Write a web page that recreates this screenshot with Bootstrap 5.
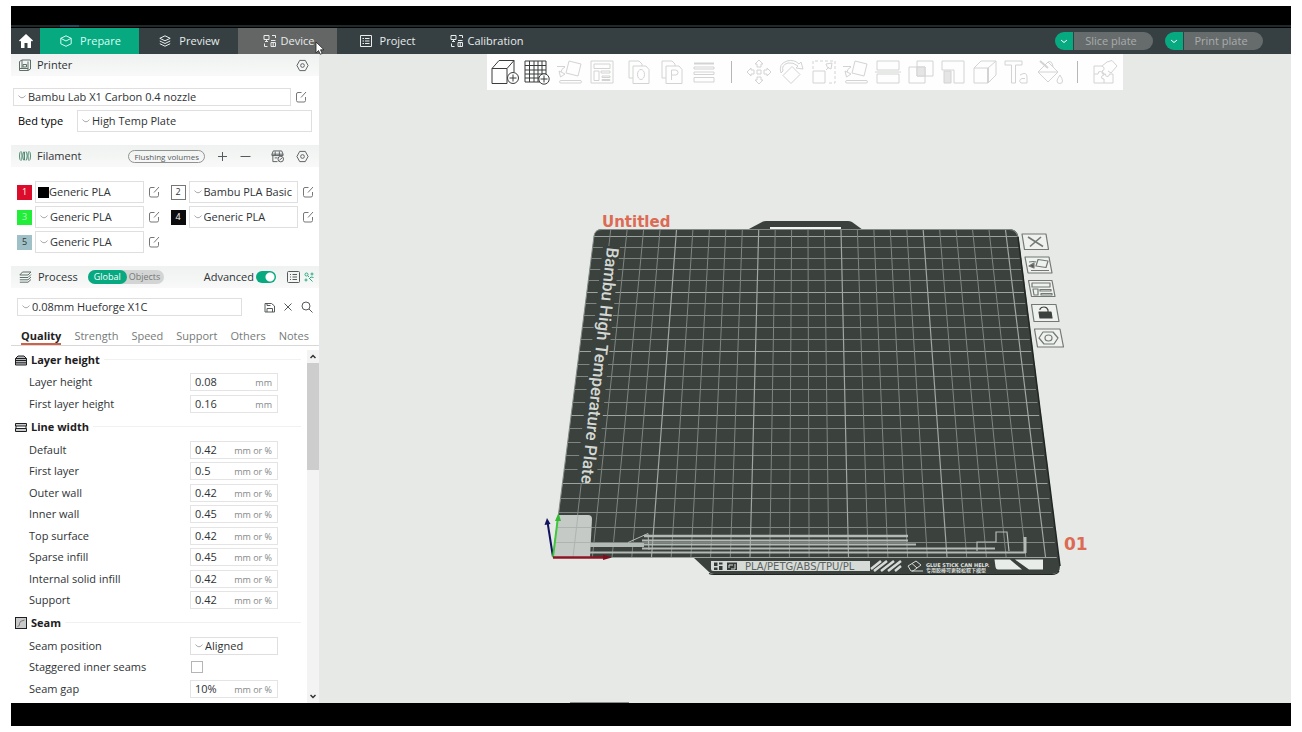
<!DOCTYPE html>
<html lang="en">
<head>
<meta charset="utf-8">
<meta name="viewport" content="width=device-width, initial-scale=1">
<title>Untitled</title>
<link rel="stylesheet" href="https://cdn.jsdelivr.net/npm/bootstrap@5.3.0/dist/css/bootstrap.min.css">
<style>
:root{--accent:#07a981;--edge:#dfdfdf;--ink:#2f3336}
body{font-family:"Open Sans","Noto Sans","Noto Sans CJK SC",sans-serif;font-size:11px;line-height:16px;color:var(--ink);background:#fff}
svg{display:block;flex:none}
button{font:inherit;color:inherit;background:none;border:0;padding:0}
.line-art{fill:none;stroke:currentColor;stroke-width:1}
.shell{height:100vh;min-height:500px;padding:6px 11px}
.screen{background:#000;padding-bottom:23px}
.top-strip{height:22px;background:#000;border-bottom:1px solid #000;display:flex;align-items:flex-end}
.top-strip::before{content:"";flex:1;height:2px;background:linear-gradient(90deg,transparent 49px,#1d4a5c 49px 68px,transparent 68px) #20292a}
.main-nav{height:26px;background:#364043;color:#e8eceb}
.main-nav .home{width:29px}
.tab-btn{width:99px;padding-left:2px}
.tab-btn.on{background:var(--accent);color:#d5fff1}
.tab-btn.hot{background:#646665}
.split-set{gap:12px}
.split{height:18px;border-radius:9px;overflow:hidden;gap:1px}
.split .more{width:18px;background:var(--accent);color:#fff}
.split .act{width:79px;background:#666c6c;color:#a9adac;padding-right:5px}
.side{width:308px;background:#fff}
.side button{color:#555a5c}
.bar-head{height:22px;background:linear-gradient(#eff2f0,#f8f9f8);padding:0 10px 0 8px}
.bar-name{margin-left:6px}
.pick{appearance:none;border:1px solid var(--edge);border-radius:0;color:var(--ink);height:22px;padding:0 0 0 14px;min-width:0;background:#fff url("data:image/svg+xml,%3Csvg xmlns='http://www.w3.org/2000/svg' width='8' height='4'%3E%3Cpath d='M.5.5Q2 2.8 4 2.8T7.500.5' fill='none' stroke='%23aaa'/%3E%3C/svg%3E") 4px 50%/8px 4px no-repeat}
.pick.short{height:18px}
.pick.swatch{background:linear-gradient(#000,#000) 2px 50%/11px 11px no-repeat #fff;padding-left:13px}
.pick.preset{width:225px}
.chip{width:15px;height:15px;font-size:9px;border:1px solid transparent}
.spools{display:grid;grid-template-columns:1fr 1fr;column-gap:10px;row-gap:3px;padding:14px 5px 0 6px}
.spools > div{gap:3px}
.spools .pick{width:109px}
.spools button{margin-left:1px}
.flush{border:1px solid #8f9491;border-radius:8px;height:13px;font-size:8px;line-height:11px;padding:0 5px}
.scope{height:14px;border-radius:7px;background:#d2d5d3;font-size:9px;line-height:14px;margin-left:10px}
.scope button{display:block;line-height:14px;padding:0 4px 0 2px;color:#777}
.scope .on{background:var(--accent);color:#fff;border-radius:7px;padding:0 6px}
.toggle{appearance:none;width:20px;height:12px;border-radius:6px;margin:0 11px 0 2px;background:radial-gradient(circle at 14px 6px,#fff 4px,transparent 5px) var(--accent)}
.tabs-row{gap:13px;border-bottom:1px solid #d8d8d8;padding:0 10px;height:19px;margin-top:11px}
.tabs-row button{height:18px;white-space:nowrap;color:#767a79}
.tabs-row .on{font-weight:700;color:#222;box-shadow:inset 0 -2px #d0604a}
.opts{padding:3px 0 5px;min-height:0;overflow:hidden}
.grp{height:21px;padding:0 6px 0 4px;font-weight:700;color:#1d2022;gap:4px}
.grp::after{content:"";flex:1;border-top:1px solid #f1f1f1}
.opt{height:18px;padding:0 29px 0 18px}
.opt .pick{width:88px}
.field{width:88px;height:18px;border:1px solid #e4e4e4;padding:0 5px 0 4px}
.field input{width:28px;flex:1;border:0;padding:0;background:none;color:inherit;height:16px}
.field span{font-size:9px;color:#858988;padding-top:2px}
.tick{appearance:none;width:12px;height:12px;border:1px solid #b5b5b5;margin:0 75px 0 0}
.track{width:12px;background:#f3f3f3}
.thumb{height:107px;background:#cdcdcd}
.fill-rest{min-height:0}
.view{background:#e6e9e5;min-width:0}
.tools{width:636px;max-width:100%;height:36px;background:#fdfefd;color:#d2d4d2;padding:0 2px}
.tools button{flex:1 1 0;display:flex;justify-content:center}
.tools .live{color:#3a3d3c}
.tools i{width:1px;height:22px;background:#b5b8b6;margin:0 11px}
.scene{min-height:0;flex:1;width:100%}
.pointer{position:absolute;right:12px;top:13px;z-index:2}
</style>
</head>
<body>
<svg width="0" height="0" class="position-absolute" aria-hidden="true">
<defs>
<symbol id="edit" viewBox="0 0 12 12"><path d="M6.500 1.500H3Q1.500 1.500 1.500 3V9.500Q1.500 11 3 11H9Q10.500 11 10.500 9.500V6M6 6.500L11 1"/></symbol>
<symbol id="nut" viewBox="0 0 14 14"><path d="M4 1.500H10L13 7L10 12.500H4L1 7Z" stroke-linejoin="round"/><circle cx="7" cy="7" r="2"/></symbol>
<symbol id="net" viewBox="0 0 14 14"><path d="M1 1.500H6V5.500H1ZM3.500 5.500V7M2 7.500H5M9 1.500H12.500V4M1.500 9.500V12.500H4.500M8 8.500H12.500V12.500H8ZM10.200 8.500V12.500M8 6.500H12.500"/></symbol>
<symbol id="drop" viewBox="0 0 26 26"><path d="M12 2L24 5L21 17L9 14ZM4 21.500H23Q24.500 21.500 24.500 22.800T23 24H4Q2.500 24 2.500 22.800T4 21.500ZM8 8Q4 10 4 13M2 12L3.500 18L8 15ZM0 7.500H8"/></symbol>
</defs>
</svg>

<div class="shell">
<div class="screen h-100 d-flex flex-column">
  <div class="top-strip"></div>
  <nav class="main-nav d-flex align-items-stretch">
    <button class="home d-flex align-items-center justify-content-center" aria-label="Home"><svg width="14" height="14" viewBox="0 0 14 14"><path d="M7 0L0 6.500L1 7.500L2 6.800V14H5.500V9H8.500V14H12V6.800L13 7.500L14 6.500Z" fill="#fff"/></svg></button>
    <button class="tab-btn on d-flex align-items-center justify-content-center gap-2"><svg class="line-art" width="12" height="12" viewBox="0 0 12 12"><path d="M6 .8L11.200 3.300V8.800L6 11.300L.8 8.800V3.300ZM.8 3.300L6 6L11.200 3.300"/></svg>Prepare</button>
    <button class="tab-btn d-flex align-items-center justify-content-center gap-2"><svg class="line-art" width="12" height="12" viewBox="0 0 12 12"><path d="M6 .8L11.200 3.300L6 5.800L.8 3.300ZM.8 6L6 8.500L11.200 6M.8 8.700L6 11.200L11.200 8.700"/></svg>Preview</button>
    <button class="tab-btn hot d-flex align-items-center justify-content-center gap-1 position-relative"><svg class="line-art" width="14" height="14"><use href="#net"/></svg>Device
      <svg class="pointer" width="10" height="14" viewBox="0 0 10 14"><path d="M1 1V12L3.500 9.500L5.300 13.300L7.200 12.400L5.500 8.800H9Z" fill="#fff" stroke="#222" stroke-width=".8"/></svg></button>
    <button class="tab-btn d-flex align-items-center justify-content-center gap-2"><svg class="line-art" width="12" height="12" viewBox="0 0 12 12"><path d="M.5.500H11.500V11.500H.5ZM2.500 3.500H4M5 3.500H9.500M2.500 6H4M5 6H9.500M2.500 8.500H4M5 8.500H9.500"/></svg>Project</button>
    <button class="tab-btn d-flex align-items-center justify-content-center gap-1"><svg class="line-art" width="14" height="14"><use href="#net"/></svg>Calibration</button>
    <div class="split-set ms-auto d-flex align-items-center me-4 pe-1">
      <div class="split d-flex"><button class="more" aria-label="Slice options"><svg class="line-art mx-auto" width="8" height="5"><path d="M1 1L4 3.500L7 1"/></svg></button><button class="act">Slice plate</button></div>
      <div class="split d-flex"><button class="more" aria-label="Print options"><svg class="line-art mx-auto" width="8" height="5"><path d="M1 1L4 3.500L7 1"/></svg></button><button class="act">Print plate</button></div>
    </div>
  </nav>

  <div class="fill-rest d-flex flex-grow-1">
    <aside class="side d-flex flex-column flex-shrink-0">
      <div class="bar-head d-flex align-items-center">
        <svg class="line-art" width="12" height="12" viewBox="0 0 12 12" color="#5c7068"><path d="M3 1H11.500V10L9 11.500H.5V2.500ZM3 1V9.500M9 2.500V11.500M.5 9.500H9M4 5.500H7.500V8H4Z"/></svg>
        <span class="bar-name flex-grow-1">Printer</span>
        <button aria-label="Printer settings"><svg class="line-art" width="13" height="13"><use href="#nut"/></svg></button>
      </div>
      <div class="d-flex align-items-center" style="padding:12px 12px 0 2px">
        <select class="pick short flex-grow-1" aria-label="Printer preset"><option>Bambu Lab X1 Carbon 0.4 nozzle</option></select>
        <button aria-label="Edit printer" class="ms-1"><svg class="line-art" width="12" height="12" color="#777"><use href="#edit"/></svg></button>
      </div>
      <div class="d-flex align-items-center" style="padding:4px 7px 13px">
        <label for="bed" style="width:59px" class="text-black">Bed type</label>
        <select id="bed" class="pick flex-grow-1"><option>High Temp Plate</option></select>
      </div>

      <div class="bar-head d-flex align-items-center">
        <svg class="line-art" width="12" height="10" viewBox="0 0 12 10" color="#4f8a74"><path d="M2 .5Q.5.500.5 5T2 9.500Q3 9.500 3 5T2 .5M5 .5Q3.800 3 3.800 5T5 9.500M7 .5Q8.200 3 8.200 5T7 9.500M10 .5Q9 .5 9 5T10 9.500Q11.500 9.500 11.500 5T10 .5M5.500 1V9"/></svg>
        <span class="bar-name flex-grow-1">Filament</span>
        <button class="flush">Flushing volumes</button>
        <button aria-label="Add filament" style="margin-left:12px"><svg class="line-art" width="11" height="11"><path d="M5.500 1V10M1 5.500H10"/></svg></button>
        <button aria-label="Remove filament" style="margin-left:12px"><svg class="line-art" width="11" height="11"><path d="M.5 5.500H10.500"/></svg></button>
        <button aria-label="Sync filaments" style="margin:0 12px 0 20px"><svg class="line-art" width="13" height="13" viewBox="0 0 14 14"><path d="M2.500 1H11.500L13 4.500H1ZM1 4.500V6H13V4.500M2 6V12.500H7M4.500 1.500V6M9 1.500V6M4 8.500H7"/><circle cx="10.500" cy="9.800" r="3"/><path d="M9 11L12 8.500"/></svg></button>
        <button aria-label="Filament settings"><svg class="line-art" width="13" height="13"><use href="#nut"/></svg></button>
      </div>
      <div class="spools">
        <div class="d-flex align-items-center"><span class="chip d-flex align-items-center justify-content-center text-white" style="background:#dc0d2b">1</span><select class="pick swatch" aria-label="Filament 1"><option>Generic PLA</option></select><button aria-label="Edit filament 1"><svg class="line-art" width="12" height="12" color="#777"><use href="#edit"/></svg></button></div>
        <div class="d-flex align-items-center"><span class="chip d-flex align-items-center justify-content-center" style="border-color:#777">2</span><select class="pick" aria-label="Filament 2"><option>Bambu PLA Basic</option></select><button aria-label="Edit filament 2"><svg class="line-art" width="12" height="12" color="#777"><use href="#edit"/></svg></button></div>
        <div class="d-flex align-items-center"><span class="chip d-flex align-items-center justify-content-center" style="background:#22ee3a;color:#b4ffbc">3</span><select class="pick" aria-label="Filament 3"><option>Generic PLA</option></select><button aria-label="Edit filament 3"><svg class="line-art" width="12" height="12" color="#777"><use href="#edit"/></svg></button></div>
        <div class="d-flex align-items-center"><span class="chip d-flex align-items-center justify-content-center text-white" style="background:#0c0c0c">4</span><select class="pick" aria-label="Filament 4"><option>Generic PLA</option></select><button aria-label="Edit filament 4"><svg class="line-art" width="12" height="12" color="#777"><use href="#edit"/></svg></button></div>
        <div class="d-flex align-items-center"><span class="chip d-flex align-items-center justify-content-center" style="background:#9fc0c6">5</span><select class="pick" aria-label="Filament 5"><option>Generic PLA</option></select><button aria-label="Edit filament 5"><svg class="line-art" width="12" height="12" color="#777"><use href="#edit"/></svg></button></div>
      </div>

      <div class="bar-head d-flex align-items-center" style="margin:13px 0 10px;padding-right:5px">
        <svg class="line-art" width="13" height="12" viewBox="0 0 13 12" color="#5c7068"><path d="M3.500 1H12L9 4H.8ZM.8 6.500H9L12 3.500M.8 8.800H9L12 6M.8 11.200H9L12 8.500"/></svg>
        <span class="bar-name">Process</span>
        <div class="scope d-flex"><button class="on">Global</button><button>Objects</button></div>
        <label class="ms-auto" for="adv">Advanced</label>
        <input id="adv" type="checkbox" class="toggle" checked>
        <button aria-label="Parameter list"><svg class="line-art" width="13" height="12" viewBox="0 0 13 12"><rect x=".5" y=".5" width="12" height="11" rx="1"/><path d="M3 3.500H4M5.500 3.500H10M3 6H4M5.500 6H10M3 8.500H4M5.500 8.500H10"/></svg></button>
        <button aria-label="Compare presets" class="ms-1"><svg class="line-art" width="10" height="10" viewBox="0 0 10 10" color="#2da885"><circle cx="2.500" cy="2.500" r="1.500"/><circle cx="8" cy="2" r="1"/><circle cx="2" cy="8" r="1"/><path d="M4 4L5 5M5 7L7 5L9.500 5.500M6 7L8.500 9.500"/></svg></button>
      </div>
      <div class="d-flex align-items-center" style="padding:0 6px">
        <select class="pick short preset" aria-label="Process preset"><option>0.08mm Hueforge X1C</option></select>
        <div class="ms-auto d-flex align-items-center gap-2">
          <button aria-label="Save"><svg class="line-art" width="11" height="11"><path d="M1 1.500H7.500L10.500 4V10H1ZM3 10V6.500H8.500V10M3 1.500V3.500H6.500"/></svg></button>
          <button aria-label="Discard"><svg class="line-art" width="10" height="10"><path d="M1.500 1.500L8.500 8.500M8.500 1.500L1.500 8.500"/></svg></button>
          <button aria-label="Search"><svg class="line-art" width="12" height="12"><circle cx="5" cy="5" r="4"/><path d="M8 8L11.500 11.500"/></svg></button>
        </div>
      </div>
      <div class="tabs-row d-flex">
        <button class="on">Quality</button><button>Strength</button><button>Speed</button><button>Support</button><button>Others</button><button>Notes</button>
      </div>
      <div class="fill-rest d-flex flex-grow-1">
        <div class="opts flex-grow-1 d-flex flex-column justify-content-between">
          <div class="grp d-flex align-items-center"><svg class="line-art" width="12" height="12" viewBox="0 0 12 12"><path d="M3 2H9L11.500 4.500H.5ZM.5 4.500V11H11.500V4.500" fill="#bbb"/><path d="M.5 6.500H11.500M.5 8.800H11.500"/></svg>Layer height</div>
          <div class="opt d-flex align-items-center justify-content-between"><label for="o1">Layer height</label><div class="field d-flex align-items-center"><input id="o1" value="0.08"><span>mm</span></div></div>
          <div class="opt d-flex align-items-center justify-content-between"><label for="o2">First layer height</label><div class="field d-flex align-items-center"><input id="o2" value="0.16"><span>mm</span></div></div>
          <div class="grp d-flex align-items-center"><svg class="line-art" width="12" height="12" viewBox="0 0 12 12"><path d="M.5 2.500H11.500V5H.5ZM.5 7.500H11.500V10.500H.5Z" fill="#ccc"/><path d="M1 5V7.500M11 5V7.500"/></svg>Line width</div>
          <div class="opt d-flex align-items-center justify-content-between"><label for="o3">Default</label><div class="field d-flex align-items-center"><input id="o3" value="0.42"><span>mm or %</span></div></div>
          <div class="opt d-flex align-items-center justify-content-between"><label for="o4">First layer</label><div class="field d-flex align-items-center"><input id="o4" value="0.5"><span>mm or %</span></div></div>
          <div class="opt d-flex align-items-center justify-content-between"><label for="o5">Outer wall</label><div class="field d-flex align-items-center"><input id="o5" value="0.42"><span>mm or %</span></div></div>
          <div class="opt d-flex align-items-center justify-content-between"><label for="o6">Inner wall</label><div class="field d-flex align-items-center"><input id="o6" value="0.45"><span>mm or %</span></div></div>
          <div class="opt d-flex align-items-center justify-content-between"><label for="o7">Top surface</label><div class="field d-flex align-items-center"><input id="o7" value="0.42"><span>mm or %</span></div></div>
          <div class="opt d-flex align-items-center justify-content-between"><label for="o8">Sparse infill</label><div class="field d-flex align-items-center"><input id="o8" value="0.45"><span>mm or %</span></div></div>
          <div class="opt d-flex align-items-center justify-content-between"><label for="o9">Internal solid infill</label><div class="field d-flex align-items-center"><input id="o9" value="0.42"><span>mm or %</span></div></div>
          <div class="opt d-flex align-items-center justify-content-between"><label for="o10">Support</label><div class="field d-flex align-items-center"><input id="o10" value="0.42"><span>mm or %</span></div></div>
          <div class="grp d-flex align-items-center"><svg class="line-art" width="12" height="12" viewBox="0 0 12 12"><rect x=".5" y=".5" width="11" height="11" fill="#c9c9c9"/><path d="M2.500 9.500Q5 9 4.500 6.500T9.500 3" stroke="#777"/></svg>Seam</div>
          <div class="opt d-flex align-items-center justify-content-between"><label for="o11">Seam position</label><select id="o11" class="pick short"><option>Aligned</option></select></div>
          <div class="opt d-flex align-items-center justify-content-between"><label for="o12">Staggered inner seams</label><input id="o12" type="checkbox" class="tick"></div>
          <div class="opt d-flex align-items-center justify-content-between"><label for="o13">Seam gap</label><div class="field d-flex align-items-center"><input id="o13" value="10%"><span>mm or %</span></div></div>
        </div>
        <div class="track d-flex flex-column mt-1">
          <svg class="line-art mx-auto my-1" width="6" height="5"><path d="M.5 4L3 1.500L5.500 4" stroke-width="1.500"/></svg>
          <div class="thumb"></div>
          <svg class="line-art mx-auto mt-auto mb-1" width="6" height="5"><path d="M.5 1L3 3.500L5.500 1" stroke-width="1.500"/></svg>
        </div>
      </div>
    </aside>

    <main class="view flex-grow-1 d-flex flex-column align-items-center">
      <div class="tools d-flex align-items-center">
        <button class="live" aria-label="Add object"><svg class="line-art" width="28" height="26"><path d="M1 9.500H16V24.500H1ZM1 9.500L8 1.500H23L16 9.500M23 1.500V13"/><circle cx="22" cy="19" r="5.500" fill="#fdfefd"/><path d="M22 15.500V22.500M18.500 19H25.500"/></svg></button>
        <button class="live" aria-label="Add plate"><svg class="line-art" width="26" height="26"><path d="M1 2H22V23H1ZM5.500 2V23M10 2V23M14 2V23M18 2V23M1 6.500H22M1 11H22M1 15H22M1 19H22"/><circle cx="20" cy="20" r="5.200" fill="#fdfefd"/><path d="M20 16.500V23.500M16.500 20H23.500"/></svg></button>
        <button aria-label="Auto orient"><svg class="line-art" width="26" height="26"><use href="#drop"/></svg></button>
        <button aria-label="Arrange all"><svg class="line-art" width="26" height="26"><path d="M2 2H24V24H2ZM5 5H21V9.500H5ZM5 12H10V21.500H5ZM12 12H21V14H12ZM13 17H21V18.500H13ZM13 20.500H21V21.500H13Z"/></svg></button>
        <button aria-label="Split to objects" style="margin-left:5px"><svg class="line-art" width="26" height="26"><path d="M7 19H3V2H13L16 5V7M7 7H20L23 10.500V24.500H7Z"/><ellipse cx="15" cy="15.500" rx="3.500" ry="5"/></svg></button>
        <button aria-label="Split to parts"><svg class="line-art" width="26" height="26"><path d="M7 19H3V2H13L16 5V7M7 7H20L23 10.500V24.500H7ZM12.500 21V11H16.500Q19 11 19 13.500T16.500 16H12.500"/></svg></button>
        <button aria-label="Variable layer height"><svg class="line-art" width="26" height="26"><path d="M3 4.500H23" stroke-width="2"/><path d="M3 8H23V10H3ZM3 13H23V15.500H3ZM3 18.500H23V23H3Z"/></svg></button>
        <i></i>
        <button aria-label="Move"><svg class="line-art" width="26" height="26"><path d="M11 11H15V15H11ZM13 1L17 5H15V8H11V5H9ZM13 25L17 21H15V18H11V21H9ZM1 13L5 9V11H8V15H5V17ZM25 13L21 9V11H18V15H21V17Z"/></svg></button>
        <button aria-label="Rotate"><svg class="line-art" width="26" height="26"><path d="M14 7.500L22 15.500L13 24.500L5 16.500ZM3 14Q0 5 9 2Q16 0 21 5L23 3L25 10L18 9L20 7Q15 3 10 4Q3 6 5 12Z"/></svg></button>
        <button aria-label="Scale"><svg class="line-art" width="26" height="26"><path d="M2 12H14V24H2ZM15 11L18 8M16.500 8.500L15 5L21 4L20 10Z"/><path d="M2 10V2H24V24H16" stroke-dasharray="3 2"/></svg></button>
        <button aria-label="Place on face"><svg class="line-art" width="26" height="26"><use href="#drop"/></svg></button>
        <button aria-label="Cut"><svg class="line-art" width="26" height="26"><path d="M2 11V2H24V11ZM2 15H24V24H2ZM0 13H26"/></svg></button>
        <button aria-label="Mesh boolean"><svg class="line-art" width="26" height="26"><path d="M9 2H25V17H9ZM1 8H17V24H1Z"/><path d="M9 8H17V17H9Z" fill="#e4e5e4"/></svg></button>
        <button aria-label="Support painting"><svg class="line-art" width="26" height="26"><path d="M2 2H24V24H14V11H2Z"/><path d="M4 12H11V24H4Z" fill="#e4e5e4"/></svg></button>
        <button aria-label="Seam painting"><svg class="line-art" width="26" height="26"><path d="M2 9H16V24H2ZM2 9L9 2H24L16 9M24 2V16L16 24"/><path d="M16 9V24" stroke-width="2"/></svg></button>
        <button aria-label="Text"><svg class="line-art" width="26" height="26"><path d="M1 2H18V6H11.500V24H7.500V6H1ZM16 16Q23 12 23 18V24H17Q14 21 18 19.500H21"/></svg></button>
        <button aria-label="Color painting"><svg class="line-art" width="26" height="26"><path d="M11 3L21 13L11 23L1 13ZM1 13H21M11 3Q15 1 16 8M23 16Q20 20 20 22Q20 24.500 22.800 24.500T25.500 22Q25.500 20 23 16Z"/><path d="M3 2L11 9" stroke-width="2"/></svg></button>
        <i></i>
        <button aria-label="Assembly"><svg class="line-art" width="26" height="26"><path d="M10 7H2V24H21V15M2 15H6Q6 12 8.500 12.500T10.500 15H12M12 24V20Q9 20 9.500 18T12 16V15M21 15H17.500Q17 18 15 17.500T13.500 15H12L10 12Q13 11 12 9T10 7L15 3L20 1.500L25 7L19 14L16 12"/></svg></button>
      </div>

      <svg class="scene" viewBox="319 90 972 613" preserveAspectRatio="xMidYMin meet" role="img" aria-label="Build plate">
        <defs><clipPath id="bed-area"><path d="M594 236Q595 230 602 230H1009Q1016 230 1017 237L1057 560H553Z"/></clipPath></defs>
        <path d="M747 230L763 221.500Q764 221 766 221H848Q850 221 852 222L863 230Z" fill="#3b413d"/>
        <path d="M770 228H841" stroke="#f2f4f1" stroke-width="2"/>
        <path d="M553 558L594 236Q595 229 602 229H1009Q1017 229 1018.500 237L1060 566Q1060 574 1052 574H714Q711 574 709 572L694 558Z" fill="#3b413d"/>
        <path d="M1018 237L1060 566" stroke="#222725" stroke-width="1.500"/>
        <path d="M709 573.500Q711 574.500 714 574.500H1052Q1057 574.500 1059 571" fill="none" stroke="#202422" stroke-width="1.200"/>
        <g clip-path="url(#bed-area)" fill="none">
          <path stroke="#7f8681" d="M540 247.500H1070M540 258.500H1070M540 269.500H1070M540 280.500H1070M540 303.500H1070M540 315.500H1070M540 327.500H1070M540 339.500H1070M540 364.500H1070M540 376.500H1070M540 389.500H1070M540 402.500H1070M540 428.500H1070M540 442.500H1070M540 455.500H1070M540 469.500H1070M540 498.500H1070M540 512.500H1070M540 527.500H1070M540 542.500H1070"/>
          <path stroke="#9da39f" d="M540 236.500H1070M540 292.500H1070M540 351.500H1070M540 415.500H1070M540 483.500H1070M540 557.500H1070"/>
          <path stroke="#7f8681" d="M610.700 230L572.700 557M627.100 230L592.400 557M643.600 230L612.100 557M660 230L631.800 557M692.900 230L671.200 557M709.400 230L690.900 557M725.800 230L710.600 557M742.300 230L730.300 557M775.200 230L769.700 557M791.600 230L789.400 557M808 230L809.100 557M824.500 230L828.800 557M857.400 230L868.200 557M873.900 230L887.900 557M890.300 230L907.600 557M906.800 230L927.300 557M939.700 230L966.700 557M956.100 230L986.400 557M972.600 230L1006.100 557M989 230L1025.800 557"/>
          <path stroke="#a0a6a2" stroke-width="1.200" d="M676.500 230L651.500 557M758.700 230L750 557M841 230L848.500 557M923.200 230L947 557M1005.500 230L1045.500 557"/>
        </g>
        <path d="M553 557L594 236Q595 229.500 602 229.500H1009Q1016 229.500 1018 237" fill="none" stroke="#838985"/>
        <path d="M603 246H620L596 483H576Z" fill="#3b413d"/>
        <text transform="translate(607 247) rotate(96.300)" font-family="Roboto,sans-serif" font-size="17" font-weight="500" fill="#d3d8d4">Bambu High Temperature Plate</text>

        <path d="M558 515H588Q592 515 592 519L590 557H553Z" fill="#c5cac6"/>
        <path d="M556 527.500H591M554 542.500H591M578 515L573 557" stroke="#aeb4b0" fill="none"/>
        <g fill="none" stroke="#b4bab6">
          <path d="M590 544H644M590 546H644" stroke-width="2"/>
          <path d="M628 542.500L648 533.500L649 550"/>
          <path d="M644 536H908" stroke-width="2.500"/><path d="M642 540.500H908" stroke-width="2"/><path d="M642 544.500H916" stroke-width="2"/><path d="M642 548.500H995" stroke-width="2"/><path d="M590 552.500H1026" stroke-width="2"/>
          <path d="M1025 553V537" stroke-width="3"/><path d="M977 551V542H996V532H1007L1009 551" stroke-width="1.200"/>
        </g>
        <path d="M553 557L547.500 522" stroke="#121260" stroke-width="2"/><path d="M544.500 525L547 518L550.500 524Z" fill="#121260"/>
        <path d="M553 557L558 517" stroke="#3fc83c" stroke-width="2"/><path d="M555 521L558.500 513L561 521Z" fill="#35b932"/>
        <path d="M553 557.500H607" stroke="#8c1424" stroke-width="2.500"/><path d="M603 554.500L612 557.500L603 560Z" fill="#7c1020"/>

        <path d="M711 561H870V571H713Q711 571 711 569Z" fill="#d6dbd7"/>
        <path d="M714 562.500H717.500V566H714ZM719 562.500H722.500V564.500H719ZM714 567.500H717.500V570H714ZM719 566H722.500V570H719ZM727 562.500H737V570H727Z" fill="#343a36"/><path d="M729 568V565H733M735 564V569H731" fill="none" stroke="#d6dbd7"/>
        <text x="745" y="569.500" font-family="DejaVu Sans,sans-serif" font-size="10" fill="#5b625e">PLA/PETG/ABS/TPU/PL</text>
        <path d="M871 569L881 561M874 571L887 561M881 571L894 561M888 571L901 561M895 571L901 566" stroke="#d6dbd7" stroke-width="2.500"/>
        <path d="M908 566L916 561L921 565L913 571H911ZM912 563.500L917 568M912 571H923" fill="none" stroke="#d6dbd7"/>
        <text x="926" y="567" font-family="DejaVu Sans,sans-serif" font-weight="700" font-size="5" fill="#e2e6e3">GLUE STICK CAN HELP.</text>
        <text x="926" y="571.500" font-family="Noto Sans CJK SC,sans-serif" font-weight="700" font-size="5" fill="#d6dbd7">专用胶棒可更轻松取下模型</text>
        <path d="M994.500 559.500H1010L1022 569.500H998Q996 569.500 995.500 567ZM1015 559.500H1043V569.500H1029Z" fill="#e9ede9"/>

        <text x="602" y="227" font-family="DejaVu Sans,sans-serif" font-weight="700" font-size="15" fill="#dc6a54">Untitled</text>
        <text x="1064" y="550" font-family="DejaVu Sans,sans-serif" font-weight="700" font-size="17" fill="#dc6a54">01</text>

        <g fill="none" stroke="#737875" stroke-width="1.200" stroke-linejoin="round">
          <path d="M1022 234H1046L1048.500 249.500H1024.500ZM1025 257H1049L1052 273H1028ZM1028.500 280.500H1052L1055 296.500H1031.500ZM1031.500 304.500H1056L1059 321.500H1034ZM1034.500 329H1060L1063.500 347H1037.500Z" fill="#eef1ed"/>
          <path d="M1028 237L1043 246.500M1041 237L1030 246.500" stroke-width="1.600"/>
          <path d="M1038 259.500L1048 261L1046 267.500L1036 266ZM1031 270.500H1049M1029 262Q1034 261 1036 262"/><path d="M1029 266L1034 263V268Z" fill="#555"/>
          <path d="M1032 283H1050V287H1032ZM1033 289H1038V295H1034ZM1040 289.500H1051V291H1040ZM1041 293.500H1052V295H1041Z"/>
          <path d="M1040 310V309Q1041 307 1044 307T1048 310V312" stroke="#3c403e"/><path d="M1039 312H1051L1052 318H1040Z" fill="#3c403e" stroke="#3c403e"/>
          <path d="M1043 332H1053L1058 338L1054 344H1044L1039 338Z"/><ellipse cx="1048.500" cy="338" rx="3.500" ry="3"/>
        </g>
        <path d="M570 702.500H629" stroke="#8a8d8b"/>
      </svg>
    </main>
  </div>
</div>
</div>
<script src="https://cdn.jsdelivr.net/npm/bootstrap@5.3.0/dist/js/bootstrap.bundle.min.js"></script>
</body>
</html>
